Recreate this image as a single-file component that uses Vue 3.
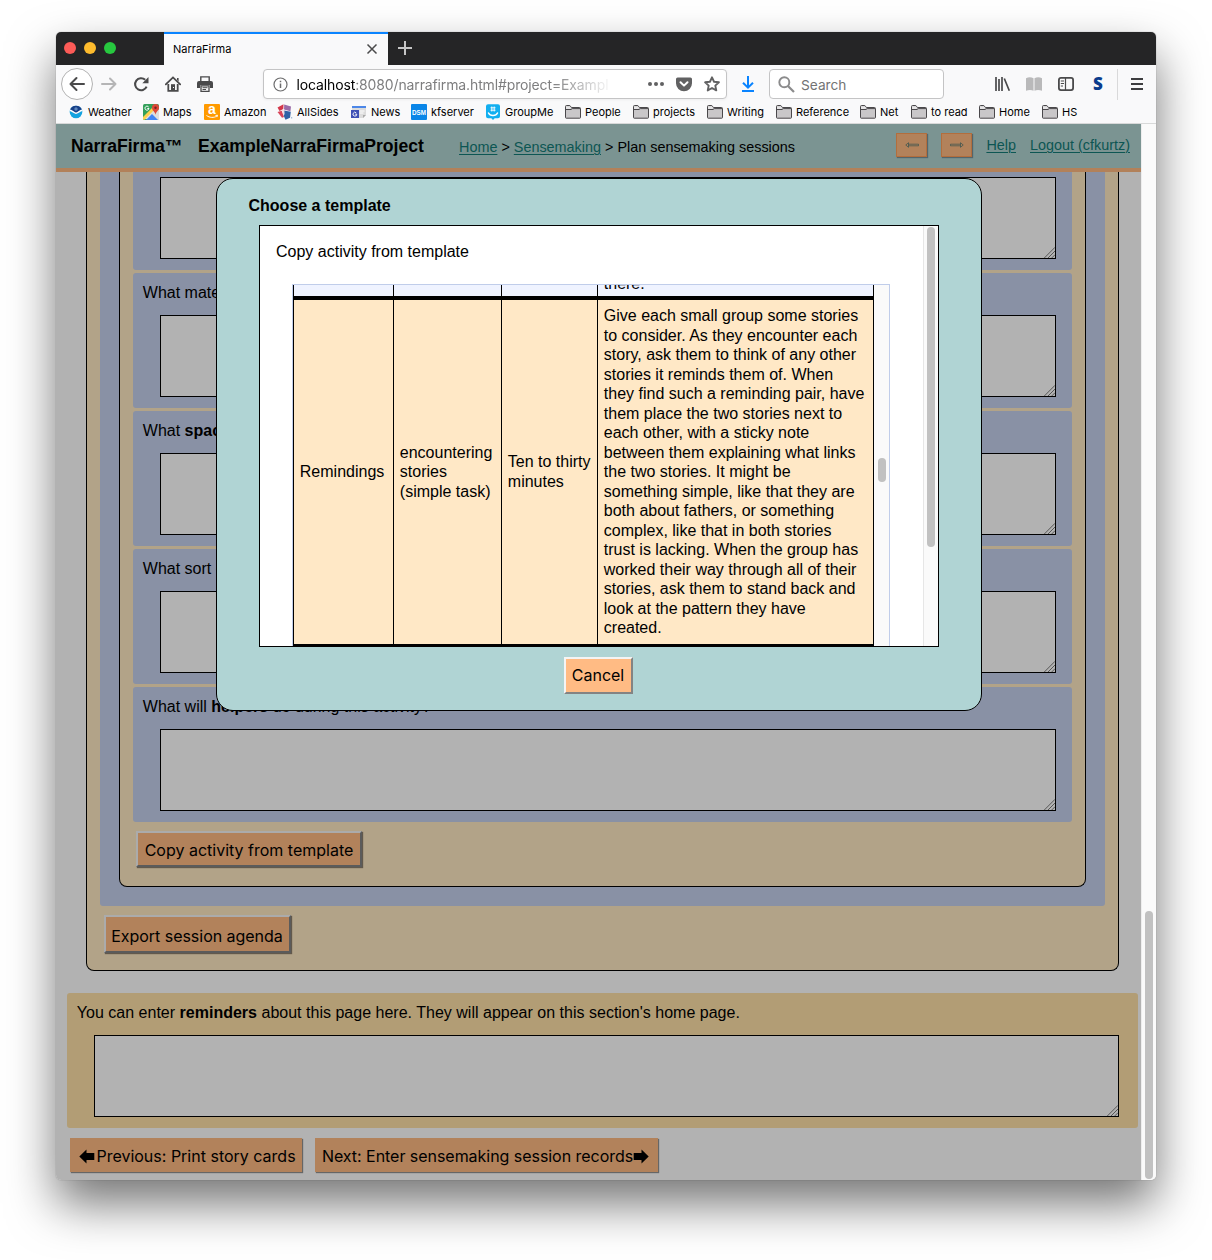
<script setup>
const bookmarks = [
  { label: 'Weather', icon: 'weather', width: 75 },
  { label: 'Maps', icon: 'maps', width: 61 },
  { label: 'Amazon', icon: 'amazon', width: 73 },
  { label: 'AllSides', icon: 'allsides', width: 74 },
  { label: 'News', icon: 'news', width: 60 },
  { label: 'kfserver', icon: 'dsm', width: 74 },
  { label: 'GroupMe', icon: 'groupme', width: 80 },
  { label: 'People', icon: 'folder', width: 68 },
  { label: 'projects', icon: 'folder', width: 74 },
  { label: 'Writing', icon: 'folder', width: 69 },
  { label: 'Reference', icon: 'folder', width: 84 },
  { label: 'Net', icon: 'folder', width: 51 },
  { label: 'to read', icon: 'folder', width: 68 },
  { label: 'Home', icon: 'folder', width: 63 },
  { label: 'HS', icon: 'folder', width: 50 },
]

const questions = [
  { before: '', strong: '', after: '' },
  { before: 'What materials will you provide for this activity?', strong: '', after: '' },
  { before: 'What ', strong: 'spaces', after: ' will you use for this activity?' },
  { before: 'What sort of facilitation will be needed?', strong: '', after: '' },
  { before: 'What will ', strong: 'helpers', after: ' do during this activity?' },
]

const template = {
  name: 'Remindings',
  type: 'encountering\nstories\n(simple task)',
  time: 'Ten to thirty\nminutes',
  plan: [
    'Give each small group some stories',
    'to consider. As they encounter each',
    'story, ask them to think of any other',
    'stories it reminds them of. When',
    'they find such a reminding pair, have',
    'them place the two stories next to',
    'each other, with a sticky note',
    'between them explaining what links',
    'the two stories. It might be',
    'something simple, like that they are',
    'both about fathers, or something',
    'complex, like that in both stories',
    'trust is lacking. When the group has',
    'worked their way through all of their',
    'stories, ask them to stand back and',
    'look at the pattern they have',
    'created.',
  ].join('\n'),
}
</script>

<template>
  <div class="desktop">
    <div class="window">
      <div class="titlebar">
        <div class="lights"><i class="red"></i><i class="yellow"></i><i class="green"></i></div>
        <div class="tab">
          <span>NarraFirma</span>
          <svg width="12" height="12" viewBox="0 0 12 12"><path d="M1.500 1.500l9 9M10.500 1.500l-9 9" stroke="#4a4a4b" stroke-width="1.500" /></svg>
        </div>
        <svg class="plus" width="14" height="14" viewBox="0 0 14 14"><path d="M7 0v14M0 7h14" stroke="#c6c6c6" stroke-width="2" /></svg>
      </div>

      <div class="toolbar">
        <div class="back">
          <svg width="18" height="18" viewBox="0 0 18 18" fill="none" stroke="#4a4a4b" stroke-width="2" stroke-linecap="round" stroke-linejoin="round"><path d="M16 9H2.500M8.500 3l-6 6 6 6" /></svg>
        </div>
        <svg class="ic fwd" viewBox="0 0 16 16" fill="none" stroke="#b5b5b6" stroke-width="2" stroke-linecap="round" stroke-linejoin="round"><path d="M1 8h13.500M9 2.500L14.500 8 9 13.500" /></svg>
        <svg class="ic gap" viewBox="0 0 16 16"><path d="M13.600 10.600A6 6 0 1 1 12.200 3.800" fill="none" stroke="#4a4a4b" stroke-width="2.100" /><path d="M15.500 1v6.200H9.300z" fill="#4a4a4b" /></svg>
        <svg class="ic gap" viewBox="0 0 16 16"><path d="M.8 8.400L8 1.400l7.200 7" fill="none" stroke="#4a4a4b" stroke-width="1.800" stroke-linecap="round" /><path d="M3.300 8v6.900h9.400V8" fill="none" stroke="#4a4a4b" stroke-width="1.800" /><path d="M6 14.500V8.200h4v6.300z" fill="#4a4a4b" /><path d="M12 2h1.600v3.500L12 4z" fill="#4a4a4b" /><rect x="8" y="11" width="1" height="1" fill="#fff" /></svg>
        <svg class="ic gap" viewBox="0 0 16 16"><path d="M3.800 5V.9h8.400V5" fill="none" stroke="#4a4a4b" stroke-width="1.400" /><path d="M2 5h12a2 2 0 0 1 2 2v5h-3V9.200H3V12H0V7a2 2 0 0 1 2-2z" fill="#4a4a4b" /><path d="M4 9.800h8v5.500H4z" fill="#f9f9fa" stroke="#4a4a4b" stroke-width="1.300" /><path d="M5.500 11.700h5M5.500 13.500h3.500" stroke="#4a4a4b" /></svg>

        <div class="url">
          <svg class="info" width="15" height="15" viewBox="0 0 15 15"><circle cx="7.500" cy="7.500" r="6.500" fill="none" stroke="#6c6c6d" stroke-width="1.200" /><path d="M7.500 6.500v4.500M7.500 3.700v1.600" stroke="#6c6c6d" stroke-width="1.500" /></svg>
          <div class="address">localhost<span>:8080/narrafirma.html#project=Exampl</span></div>
          <svg class="dots" viewBox="0 0 16 16" fill="#616162"><circle cx="2" cy="8" r="2" /><circle cx="8" cy="8" r="2" /><circle cx="14" cy="8" r="2" /></svg>
          <svg class="pocket" viewBox="0 0 16 16"><path d="M1.600 1.400h12.800A1.600 1.600 0 0 1 16 3v4.300a8 8 0 0 1-16 0V3a1.600 1.600 0 0 1 1.600-1.600z" fill="#616162" /><path d="M4.500 6.200L8 9.600l3.500-3.400" fill="none" stroke="#fff" stroke-width="2" stroke-linecap="round" stroke-linejoin="round" /></svg>
          <svg class="star" viewBox="0 0 16 16"><path d="M8 1.300l2.050 4.450 4.850.55-3.600 3.300.98 4.800L8 12l-4.280 2.400.98-4.800-3.600-3.300 4.850-.55z" fill="none" stroke="#616162" stroke-width="1.900" stroke-linejoin="round" /></svg>
        </div>

        <svg class="ic download" viewBox="0 0 16 16" fill="none" stroke="#0a84ff" stroke-width="2"><path d="M8 0v11M3 6.700l5 5 5-5M2 15h12" /></svg>

        <div class="search">
          <svg width="17" height="17" viewBox="0 0 17 17" fill="none" stroke="#8b8b8c"><circle cx="6.300" cy="6.300" r="5" stroke-width="1.900" /><path d="M10 10l6 6" stroke-width="2.200" /></svg>
          <span>Search</span>
        </div>

        <svg class="ic library" viewBox="0 0 16 16" stroke="#4a4a4b" stroke-width="1.700"><path d="M2 1v14M5 3v12M8 1v14M10.300 2.500l5 12.300" /></svg>
        <svg class="ic gap" viewBox="0 0 16 16" fill="#b9b9ba"><path d="M0 2.200C2.500.8 5.500 1 7.500 2.300v12.500C5.500 13.600 2.500 13.600 0 14.800zM16 2.200C13.500.8 10.500 1 8.500 2.300v12.500c2-1.200 5-1.200 7.500 0z" /></svg>
        <svg class="ic gap" viewBox="0 0 16 16"><rect x=".9" y="1.900" width="14.200" height="12.200" rx="2" fill="none" stroke="#4a4a4b" stroke-width="1.800" /><path d="M7.500 2v12M2.800 5h3.200M2.800 7.500h3.200M2.800 10h2.200" stroke="#4a4a4b" stroke-width="1.200" /></svg>
        <span class="letter">S</span>
        <i class="sep"></i>
        <svg class="ic menu" viewBox="0 0 16 16" stroke="#3e3e40" stroke-width="2"><path d="M2 3h12M2 8h12M2 13h12" /></svg>
      </div>

      <div class="bookmarks">
        <div v-for="b in bookmarks" :key="b.label" class="bookmark" :style="{ width: b.width + 'px' }">
          <svg v-if="b.icon === 'weather'" viewBox="0 0 16 16"><circle cx="8" cy="8" r="6.300" fill="#14a3e0" /><path d="M2 6.200A6.300 6.300 0 0 1 14 6.200L9.500 9.500h-3z" fill="#173f87" /><path d="M1.700 6.200c2.800.4 4.200 3 6.300 3s3.500-2.600 6.300-3" fill="none" stroke="#fff" stroke-width="1.500" /><circle cx="8" cy="5" r="1.700" fill="#5c86bd" /></svg>
          <svg v-else-if="b.icon === 'maps'" viewBox="0 0 16 16"><rect width="16" height="16" rx="1.500" fill="#34a05a" /><path d="M1 15L13 3l3 3v10z" fill="#e0e0dc" /><path d="M3 16l6-6 6 6z" fill="#4285f4" /><path d="M0 13L12 1l2 2L1.500 15.700 0 15.500z" fill="#ffd04b" /><path d="M12.500 0a3.600 3.600 0 0 1 3.500 3.700c0 2.500-2.800 3.600-3.500 7-.7-3.400-3.500-4.500-3.500-7A3.600 3.600 0 0 1 12.500 0z" fill="#df4938" /><circle cx="12.500" cy="3.700" r="1.200" fill="#73251f" /><path d="M5.700 3.100A2 2 0 1 0 6 4.500H4.300" stroke="#fff" fill="none" /></svg>
          <svg v-else-if="b.icon === 'amazon'" viewBox="0 0 16 16"><rect width="16" height="16" rx="1" fill="#ff9a00" /><text x="8" y="10.300" text-anchor="middle" class="glyph-a">a</text><path d="M2.500 11.500c3 2.300 7.500 2.500 10.300.6M11.500 11.500l2-.3-.6 1.900" fill="none" stroke="#fff" /></svg>
          <svg v-else-if="b.icon === 'allsides'" viewBox="0 0 16 16"><path d="M.5 3.500L6.500.3 6.300 5 2.500 7z" fill="#d3374a" /><path d="M7.200.5l6.800 2-.6 4.700L7 5.500z" fill="#9a6ba8" /><path d="M.5 8l4.200-1.300L7 13l-2 .7z" fill="#d8455a" /><path d="M7 6.500l6.800 1.300-.8 6-4.500 2L6.800 12z" fill="#2f62a6" /><path d="M4.800 6l2.500-.6.3 4.600-1 1.500z" fill="#f4dfe4" /><path d="M14.700 13v1.500" stroke="#8faed2" /></svg>
          <svg v-else-if="b.icon === 'news'" viewBox="0 0 16 16"><path d="M1 2h14v9l-3 3H1z" fill="#dcdcdc" /><path d="M1 2h14v2H1z" fill="#4c87e8" /><path d="M8.500 7h5M8.500 9h4" stroke="#fff" /><path d="M15 11l-3 3v-3z" fill="#aaa" /><rect y="6" width="8" height="8" fill="#3f51b5" /><path d="M5.200 8.800A1.900 1.900 0 1 0 5.800 10.200H4.200" stroke="#fff" stroke-width=".9" fill="none" /></svg>
          <svg v-else-if="b.icon === 'dsm'" viewBox="0 0 16 16"><rect width="16" height="16" rx="1" fill="#0a86e8" /><text x="8" y="10.500" text-anchor="middle" class="glyph-dsm" textLength="14" lengthAdjust="spacingAndGlyphs">DSM</text></svg>
          <svg v-else-if="b.icon === 'groupme'" viewBox="0 0 16 16"><path d="M3 .3h10a2 2 0 0 1 2 2v10a2 2 0 0 1-2 2H9.700L8 16l-1.700-1.700H3a2 2 0 0 1-2-2v-10a2 2 0 0 1 2-2z" fill="#12aff0" /><path d="M6.800 2.500v5M9.200 2.500v5M5.500 3.800h5M5.500 6.200h5" stroke="#fff" stroke-width=".9" /><path d="M3.500 9c1.500 3.300 7.500 3.300 9 0" fill="none" stroke="#fff" stroke-width="1.500" stroke-linecap="round" /></svg>
          <svg v-else viewBox="0 0 16 16"><path d="M.5 13.500v-11a1 1 0 0 1 1-1h3.300l1.700 2h8a1 1 0 0 1 1 1v9a.7.7 0 0 1-.7.7H1.200a.7.7 0 0 1-.7-.7z" fill="#c9c7c9" stroke="#4a484b" /><path d="M1 2.500h4l1 1.500-.6 1H1z" fill="#e6e5e6" /><path d="M1 5.500h5L7.200 4.600H15" stroke="#4a484b" fill="none" /></svg>
          <span>{{ b.label }}</span>
        </div>
      </div>

      <div class="viewport">
        <div class="page">
          <header>
            <b class="brand">NarraFirma™</b>
            <b class="project">ExampleNarraFirmaProject</b>
            <nav><a>Home</a> &gt; <a>Sensemaking</a> &gt; Plan sensemaking sessions</nav>
            <div class="actions">
              <div class="arrow"><svg width="14" height="6" viewBox="0 0 14 6"><path d="M3.500 2.200H13.500V3.800H3.500M3.500 .7L.8 3 3.500 5.300z" fill="none" stroke="#35514f" stroke-width=".7" /></svg></div>
              <div class="arrow"><svg width="14" height="6" viewBox="0 0 14 6"><path d="M10.500 2.200H.5V3.800h10M10.500 .7L13.200 3 10.500 5.300z" fill="none" stroke="#35514f" stroke-width=".7" /></svg></div>
              <a class="help">Help</a>
              <a>Logout (cfkurtz)</a>
            </div>
          </header>

          <main>
            <section class="outer">
              <div class="middle">
                <div class="inner">
                  <div v-for="(q, i) in questions" :key="i" class="question">
                    <p>{{ q.before }}<b>{{ q.strong }}</b>{{ q.after }}</p>
                    <div class="area"><svg width="11" height="11" viewBox="0 0 11 11" stroke="#4c4c4c" stroke-width=".9"><path d="M.3 11L11 .3M4 11l7-7M7.700 11L11 7.700" /></svg></div>
                  </div>
                  <div class="btn raised copy">Copy activity from template</div>
                </div>
              </div>
              <div class="btn raised export">Export session agenda</div>
            </section>
            <section class="question reminders">
              <p>You can enter <b>reminders</b> about this page here. They will appear on this section's home page.</p>
              <div class="area"><svg width="11" height="11" viewBox="0 0 11 11" stroke="#4c4c4c" stroke-width=".9"><path d="M.3 11L11 .3M4 11l7-7M7.700 11L11 7.700" /></svg></div>
            </section>
            <div class="pager">
              <div class="btn prev"><svg width="16" height="15" viewBox="0 0 16 15"><path d="M.3 7.500L7.500.5V4H15.300v7H7.500v3.500z" /></svg><span>Previous: Print story cards</span></div>
              <div class="btn next"><span>Next: Enter sensemaking session records</span><svg width="16" height="15" viewBox="0 0 16 15"><path d="M15.700 7.500L8.500.5V4H.7v7h7.800v3.500z" /></svg></div>
            </div>
          </main>
        </div>
        <div class="scroll"><i></i></div>

        <div class="dialog">
          <h1>Choose a template</h1>
          <div class="frame">
            <div class="body">
              <p>Copy activity from template</p>
              <div class="grid">
                <div class="rows">
                  <div class="row first"><div></div><div></div><div></div><div><span>there.</span></div></div>
                  <div class="row">
                    <div>{{ template.name }}</div>
                    <div>{{ template.type }}</div>
                    <div>{{ template.time }}</div>
                    <div>{{ template.plan }}</div>
                  </div>
                </div>
                <div class="grid-scroll"><i></i></div>
              </div>
            </div>
            <div class="frame-scroll"><i></i></div>
          </div>
          <div class="cancel">Cancel</div>
        </div>
      </div>
    </div>
  </div>
</template>

<style>
body { margin: 0; background: #fff; }
</style>

<style scoped>
* { box-sizing: border-box; }
p, h1 { margin: 0; }
svg { display: block; flex: none; }
i { display: block; }
.desktop { width: 1212px; height: 1260px; padding: 32px 56px 80px; overflow: hidden; background: #fff; font: 16px/20px "Liberation Sans", Arial, sans-serif; color: #000; }
.window { width: 1100px; height: 1148px; border-radius: 5px; box-shadow: 0 0 1px rgba(0,0,0,.5), 0 24px 48px rgba(0,0,0,.54); display: flex; flex-direction: column; }

.titlebar { height: 33px; background: #252526; border-radius: 5px 5px 0 0; display: flex; font: 11px/16px Inter, sans-serif; }
.lights { width: 108px; padding: 10px 0 0 8px; display: flex; gap: 8px; }
.lights i { width: 12px; height: 12px; border-radius: 50%; }
.red { background: #fc5b57; }
.yellow { background: #fdbb2d; }
.green { background: #27c83f; }
.tab { width: 224px; background: #f9f9fa; border-top: 2px solid #0a84ff; display: flex; align-items: center; justify-content: space-between; padding: 0 10px 1px 9px; }
.plus { margin: 9px 0 0 10px; }

.toolbar { height: 38px; background: #f9f9fa; display: flex; align-items: center; }
.ic { width: 16px; height: 16px; }
.gap { margin-left: 16px; }
.back { margin-left: 5px; width: 32px; height: 32px; border: 1px solid #b3b3b3; border-radius: 50%; background: #fff; display: grid; place-items: center; }
.fwd { margin-left: 8px; }
.url { margin-left: 50px; width: 464px; height: 30px; border: 1px solid #c4c4c5; border-radius: 4px; background: #fff; display: flex; align-items: center; box-shadow: 0 1px 3px rgba(0,0,0,.05); }
.info { margin-left: 9px; }
.address { margin: 2px 0 0 8.500px; width: 320px; white-space: nowrap; font: 14px/20px Inter, sans-serif; letter-spacing: -.13px; -webkit-mask: linear-gradient(90deg, #000 255px, transparent 316px); mask: linear-gradient(90deg, #000 255px, transparent 316px); }
.address span { color: #7e7e7f; }
.url .dots, .url .pocket, .url .star { width: 16px; height: 16px; }
.url .dots { margin-left: 31px; }
.url .pocket, .url .star { margin-left: 12px; }
.download { margin-left: 13px; }
.search { margin-left: 13px; width: 175px; height: 30px; border: 1px solid #c4c4c5; border-radius: 4px; background: #fff; display: flex; align-items: center; gap: 6px; padding-left: 8px; font: 13.700px/20px Inter, sans-serif; color: #737374; }
.search span { margin-top: 2px; }
.library { margin-left: 50px; }
.letter { width: 16px; margin-left: 16px; text-align: center; font: 900 17px/20px "Open Sans", sans-serif; color: #0b3c8c; }
.sep { width: 1px; height: 31px; margin-left: 11px; background: #d9d9da; }
.menu { margin-left: 11px; }

.bookmarks { height: 21px; background: #f9f9fa; border-bottom: 1px solid #d8d9d9; padding-left: 12px; display: flex; font: 11px/16px Inter, sans-serif; white-space: nowrap; }
.bookmark { display: flex; gap: 4px; flex: none; align-items: center; height: 18px; }
.bookmark svg { width: 16px; height: 16px; }
.glyph-a { font: 700 14px "Liberation Sans", sans-serif; fill: #fff; }
.glyph-dsm { font: 700 7px "Liberation Sans", sans-serif; fill: #fff; }

.viewport { position: relative; flex: 1; min-height: 0; display: flex; }
.page { width: 1085px; display: flex; flex-direction: column; background: #b2b2b2; border-radius: 0 0 0 5px; }
header { height: 48px; flex: none; background: #7b9492; border-bottom: 4px solid #b2815a; display: flex; align-items: flex-start; white-space: nowrap; font-size: 14.400px; line-height: 20px; }
.brand, .project { font-size: 17.600px; margin-top: 12px; }
.brand { margin-left: 15px; width: 127px; }
.project { width: 261px; }
nav { margin-top: 13px; }
a { color: #0d5653; text-decoration: underline; text-underline-offset: 2px; text-decoration-thickness: 1px; }
.actions { margin-left: auto; margin-right: 11px; display: flex; }
.arrow { width: 31px; height: 24px; margin: 9px 14px 0 0; border: 1px solid #b26e3d; background: #b2825b; box-shadow: 1px 1px 1px #55656a; display: grid; place-items: center; padding-bottom: 1px; }
.actions a { margin-top: 11px; }
.help { margin-right: 14px; }

main { flex: 1; min-height: 0; overflow: hidden; display: flex; flex-direction: column; }
.outer { margin: 0 22px 0 30px; height: 799px; flex: none; border: 1px solid #000; border-top: 0; border-radius: 0 0 8px 8px; background: #b2a388; padding: 0 13px; }
.middle { height: 734px; background: #8991a5; border-radius: 0 0 3px 3px; padding: 0 19px; }
.inner { height: 715px; border: 1px solid #000; border-top: 0; border-radius: 0 0 8px 8px; background: #b2a388; padding: 0 13px; overflow: hidden; }
.question { height: 135px; margin-bottom: 3px; border-radius: 3px; background: #8991a5; padding: 10px 16px 0 27px; }
.question:first-child { margin-top: -37px; }
.question p { margin-left: -17.200px; height: 32px; white-space: nowrap; }
.area { height: 82px; border: 1px solid #000; background: #b2b2b2; display: flex; align-items: flex-end; justify-content: flex-end; }
.btn { background: #b2825b; font: 16px/20px Inter, sans-serif; white-space: nowrap; display: flex; align-items: center; justify-content: center; }
.raised { border: 2px solid; border-color: #ababab #5b5b5b #5b5b5b #ababab; box-shadow: 1px 1px 1px #62594c; }
.copy { width: 226px; height: 36px; margin: 9px 0 0 3px; padding-top: 2px; }
.export { width: 187px; height: 38px; margin: 9px 0 0 3.500px; padding-top: 3px; letter-spacing: -.03px; }
.reminders { margin: 22px 3px 0 11px; flex: none; background: #b29d75; padding-right: 19px; }
.reminders p { letter-spacing: .01px; }
.pager { display: flex; gap: 13px; margin: 10px 0 0 14px; }
.pager .btn { height: 34px; box-shadow: 1px 1px 1px #666; padding-top: 2px; }
.pager .prev { width: 232px; padding-left: 3px; gap: 1px; }
.pager .next { width: 343px; padding-right: 2px; letter-spacing: -.04px; }

.scroll { width: 15px; background: #fafafa; border-left: 1px solid #ededed; border-radius: 0 0 5px 0; padding: 787px 0 0 3px; }
.scroll i { width: 8px; height: 268px; border-radius: 4px; background: #c1c1c1; }

.dialog { position: absolute; left: 160px; top: 54px; width: 766px; height: 533px; border: 1px solid #000; border-radius: 17px; background: #b0d4d4; padding: 17px 42px 0; display: flex; flex-direction: column; }
h1 { font-size: 16px; line-height: 20px; margin-left: -10.500px; }
.frame { height: 422px; margin-top: 9px; border: 1px solid #000; background: #fff; display: flex; overflow: hidden; flex: none; }
.body { width: 663px; padding: 16px 0 0 16px; }
.grid { margin-top: 22px; margin-left: 16px; width: 598px; height: 364px; border: 1px solid #c0cdea; border-bottom: 0; display: flex; overflow: hidden; }
.rows { width: 581px; flex: none; }
.row { height: 348px; border-bottom: 4px solid #000; display: grid; grid-template-columns: 101px 108px 96px 276px; background: #ffe8c6; line-height: 19.530px; white-space: pre; }
.row > div { display: flex; align-items: center; padding-left: 5.800px; border-right: 1px solid #000; }
.row > div:first-child { border-left: 1px solid #000; }
.row.first { height: 15px; background: #eff3ff; overflow: hidden; }
.row.first > div { align-items: flex-end; overflow: hidden; height: 11px; }
.row.first span { margin-bottom: 2px; }
.grid-scroll { flex: 1; background: #fafafa; padding: 173px 0 0 4px; }
.grid-scroll i { width: 8px; height: 24px; border-radius: 4px; background: #c1c1c1; }
.frame-scroll { width: 15px; background: #fafafa; border-left: 1px solid #e6e6e6; padding: 1px 0 0 3px; }
.frame-scroll i { width: 8px; height: 320px; border-radius: 4px; background: #c1c1c1; }
.cancel { align-self: center; width: 69px; height: 37px; margin: 10px 2px 0 0; background: #ffbb84; border: 2px solid; border-color: #f4f4f4 #838383 #838383 #f4f4f4; display: grid; place-items: center; padding-bottom: 1px; font: 16px/20px Inter, sans-serif; }
</style>
